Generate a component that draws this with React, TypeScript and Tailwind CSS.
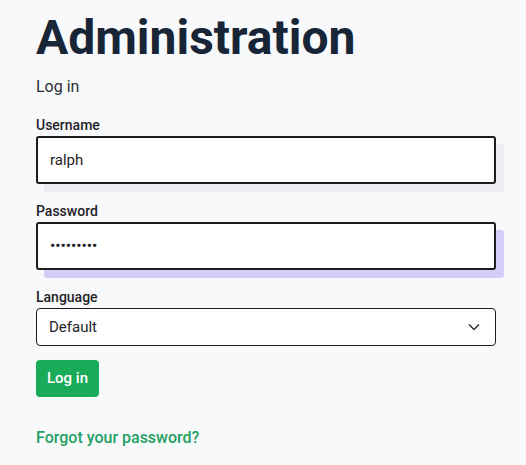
import React from "react";

export default function App() {
  return (
    <div
      className="min-h-screen bg-[#f8f9fb] px-9 pt-[10px] text-[#1f2328]"
      style={{ fontFamily: 'Roboto, "Noto Sans", sans-serif' }}
    >
      <h1 className="text-[48px] leading-[56px] font-bold text-[#172536]">
        Administration
      </h1>
      <p className="mt-[9px] text-[16px] leading-[24px] text-[#2a2e33]">Log in</p>

      <label className="mt-[16px] block text-[14px] leading-[20px] font-medium text-[#1f2328]">
        Username
      </label>
      <input
        type="text"
        defaultValue="ralph"
        className="mt-[1px] block h-[48px] w-[460px] rounded-[3px] border-2 border-[#1c1d20] bg-white px-3 text-[15px] text-[#1f2328] shadow-[8px_8px_0_#eceef4] outline-none"
      />

      <label className="mt-[17px] block text-[14px] leading-[20px] font-medium text-[#1f2328]">
        Password
      </label>
      <input
        type="password"
        defaultValue="123456789"
        className="mt-[1px] block h-[48px] w-[460px] rounded-[3px] border-2 border-[#1c1d20] bg-white px-3 text-[15px] font-medium text-[#1f2328] shadow-[8px_8px_0_#d5ccf8] outline-none"
      />

      <label className="mt-[17px] block text-[14px] leading-[20px] font-medium text-[#1f2328]">
        Language
      </label>
      <div className="mt-[1px] flex h-[38px] w-[460px] items-center justify-between rounded-[4px] border border-[#1c1d20] bg-white pl-3 pr-[15px] text-[15px] text-[#1f2328]">
        <span>Default</span>
        <svg width="12" height="8" viewBox="0 0 12 8" fill="none">
          <path d="M1 1.5l5 5 5-5" stroke="#2a2e33" strokeWidth="1.5" />
        </svg>
      </div>

      <button className="mt-[14px] block h-[37px] rounded-[4px] bg-[#19aa5a] px-[11px] text-[15px] font-medium text-white">
        Log in
      </button>

      <a className="mt-[29px] block text-[16px] leading-[24px] font-medium text-[#23a062]">
        Forgot your password?
      </a>
    </div>
  );
}
